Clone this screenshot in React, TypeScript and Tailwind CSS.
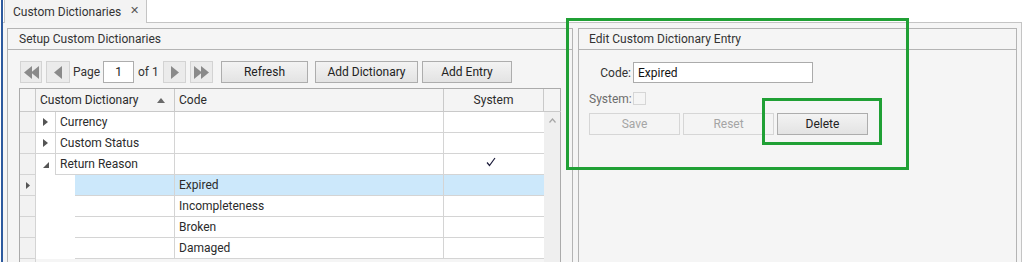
import React from "react";

type GroupRow = { kind: "group"; name: string; expanded: boolean; system?: boolean };
type ChildRow = { kind: "child"; code: string; selected?: boolean };
type Row = GroupRow | ChildRow;

const rows: Row[] = [
  { kind: "group", name: "Currency", expanded: false },
  { kind: "group", name: "Custom Status", expanded: false },
  { kind: "group", name: "Return Reason", expanded: true, system: true },
  { kind: "child", code: "Expired", selected: true },
  { kind: "child", code: "Incompleteness" },
  { kind: "child", code: "Broken" },
  { kind: "child", code: "Damaged" },
];

const TriLeft = () => (
  <svg width="8" height="13" viewBox="0 0 8 13">
    <path d="M8 0 L0 6.5 L8 13 Z" fill="#8a8a8a" />
  </svg>
);
const TriRight = () => (
  <svg width="8" height="13" viewBox="0 0 8 13">
    <path d="M0 0 L8 6.5 L0 13 Z" fill="#8a8a8a" />
  </svg>
);

const NavBtn = ({ children, w }: { children: React.ReactNode; w: string }) => (
  <div className={`${w} h-[22px] flex items-center justify-center border border-[#d3d3d3] bg-[#ebebeb]`}>{children}</div>
);

const Btn = ({ label, w }: { label: string; w: string }) => (
  <div className={`${w} h-[22px] flex items-center justify-center border border-[#adadad] bg-gradient-to-b from-[#f3f3f3] to-[#e3e3e3] text-[#222]`}>
    {label}
  </div>
);

const App = () => {
  return (
    <div className="relative w-[1023px] h-[262px] overflow-hidden bg-white flex font-['Roboto',sans-serif] text-[12px] text-[#2b2b2b]">
      <div className="w-[1px] shrink-0 bg-white" />
      <div className="w-[2px] shrink-0 bg-[#2d5a9e]" />
      <div className="w-[1020px] shrink-0 flex flex-col">
        {/* tab strip */}
        <div className="flex h-[23px] shrink-0">
          <div className="w-[1px] border-b border-[#c4c4c4]" />
          <div className="w-[143px] bg-[#f3f3f3] border-l border-r border-[#c4c4c4] flex items-center pl-[8px] text-[#333]">
            <span>Custom Dictionaries</span>
            <span className="ml-[9px] text-[11px] text-[#555]">✕</span>
          </div>
          <div className="w-[875px] border-b border-[#c4c4c4]" />
          <div className="w-[1px]" />
        </div>

        {/* main area */}
        <div className="w-[1019px] flex-1 bg-[#f5f5f5] border-r border-[#c4c4c4] pl-[4px] pr-[4px] pt-[5px] flex gap-[5px]">
          {/* left panel */}
          <div className="w-[566px] shrink-0 border-l border-t border-r border-[#b4b4b4] flex flex-col">
            <div className="h-[21px] shrink-0 border-b border-[#b4b4b4] pl-[11px] flex items-center text-[#333]">
              Setup Custom Dictionaries
            </div>
            <div className="flex-1 pl-[11px] pr-[11px] pt-[11px] flex flex-col gap-[5px]">
              {/* toolbar */}
              <div className="flex items-center h-[22px] pl-[1px]">
                <NavBtn w="w-[22px]">
                  <div className="flex -space-x-[1px]"><TriLeft /><TriLeft /></div>
                </NavBtn>
                <div className="w-[4px]" />
                <NavBtn w="w-[24px]"><TriLeft /></NavBtn>
                <div className="w-[26px] ml-[3px] text-[#333]">Page</div>
                <div className="ml-[4px] w-[31px] h-[22px] bg-white border border-[#adadad] flex items-center justify-center text-[#222]">1</div>
                <div className="ml-[4px] w-[20px] whitespace-nowrap text-[#333]">of 1</div>
                <div className="w-[5px]" />
                <NavBtn w="w-[23px]"><TriRight /></NavBtn>
                <div className="w-[4px]" />
                <NavBtn w="w-[23px]">
                  <div className="flex -space-x-[1px]"><TriRight /><TriRight /></div>
                </NavBtn>
                <div className="w-[8px]" />
                <Btn label="Refresh" w="w-[87px]" />
                <div className="w-[7px]" />
                <Btn label="Add Dictionary" w="w-[103px]" />
                <div className="w-[4px]" />
                <Btn label="Add Entry" w="w-[90px]" />
              </div>

              {/* grid */}
              <div className="w-[542px] flex-1 border-l border-t border-[#ababab] flex flex-col">
                {/* header */}
                <div className="flex h-[23px] shrink-0 bg-[#f4f4f4] border-b border-[#c9c9c9]">
                  <div className="w-[16px] border-r border-[#c9c9c9]" />
                  <div className="w-[139px] border-r border-[#c9c9c9] flex items-center pl-[4px] pr-[9px] justify-between">
                    <span>Custom Dictionary</span>
                    <svg width="8" height="5" viewBox="0 0 8 5"><path d="M0 5 L4 0 L8 5 Z" fill="#6a6a6a" /></svg>
                  </div>
                  <div className="w-[269px] border-r border-[#c9c9c9] flex items-center pl-[4px]">Code</div>
                  <div className="w-[100px] border-r border-[#c9c9c9] flex items-center justify-center">System</div>
                  <div className="w-[17px] border-r border-[#ababab]" />
                </div>

                {/* body */}
                <div className="flex flex-1">
                  <div className="w-[524px] flex flex-col">
                    {rows.map((r, i) =>
                      r.kind === "group" ? (
                        <div key={i} className="flex h-[21px]">
                          <div className="w-[16px] bg-[#f2f2f2] border-r border-b border-[#d4d4d4]" />
                          <div className={`w-[20px] bg-white border-r border-[#d4d4d4] flex items-center justify-center ${r.expanded ? "" : "border-b"}`}>
                            {r.expanded ? (
                              <svg width="6" height="6" viewBox="0 0 6 6" className="mt-[1px]"><path d="M6 0 L6 6 L0 6 Z" fill="#555" /></svg>
                            ) : (
                              <svg width="5" height="8" viewBox="0 0 5 8"><path d="M0 0 L5 4 L0 8 Z" fill="#555" /></svg>
                            )}
                          </div>
                          <div className="w-[119px] bg-white border-r border-b border-[#d4d4d4] flex items-center pl-[4px]">{r.name}</div>
                          <div className="w-[269px] bg-white border-r border-b border-[#d4d4d4]" />
                          <div className="w-[100px] bg-white border-b border-[#d4d4d4] flex items-center justify-center">
                            {r.system && (
                              <svg width="10" height="10" viewBox="0 0 10 10" className="-mt-[4px] -ml-[6px]">
                                <path d="M1 5.5 L3.5 8.5 L9 1" stroke="#1b1b3a" strokeWidth="1.2" fill="none" />
                              </svg>
                            )}
                          </div>
                        </div>
                      ) : (
                        <div key={i} className="flex h-[21px]">
                          <div className="w-[16px] bg-[#f2f2f2] border-r border-b border-[#d4d4d4] flex items-center justify-center">
                            {r.selected && (
                              <svg width="4" height="7" viewBox="0 0 4 7"><path d="M0 0 L4 3.5 L0 7 Z" fill="#555" /></svg>
                            )}
                          </div>
                          <div className="w-[39px] bg-white" />
                          <div className={`w-[100px] border-r border-b border-[#d4d4d4] ${r.selected ? "bg-[#cce8fb]" : "bg-white"}`} />
                          <div className={`w-[269px] border-r border-b border-[#d4d4d4] flex items-center pl-[4px] ${r.selected ? "bg-[#cce8fb]" : "bg-white"}`}>{r.code}</div>
                          <div className={`w-[100px] border-b border-[#d4d4d4] ${r.selected ? "bg-[#cce8fb]" : "bg-white"}`} />
                        </div>
                      )
                    )}
                    <div className="flex flex-1">
                      <div className="w-[16px] bg-[#f2f2f2] border-r border-[#d4d4d4]" />
                    </div>
                  </div>
                  <div className="w-[17px] bg-[#efefef] border-r border-[#ababab] flex justify-center pt-[6px]">
                    <svg width="7" height="5" viewBox="0 0 7 5"><path d="M0.5 4.5 L3.5 1 L6.5 4.5" stroke="#a6a6a6" strokeWidth="1.2" fill="none" /></svg>
                  </div>
                </div>
              </div>
            </div>
          </div>

          {/* right panel */}
          <div className="w-[439px] shrink-0 border-l border-t border-r border-[#b4b4b4] flex flex-col">
            <div className="h-[21px] shrink-0 border-b border-[#b4b4b4] pl-[10px] flex items-center text-[#333]">
              Edit Custom Dictionary Entry
            </div>
            <div className="pl-[10px] pt-[12px] flex flex-col">
              <div className="flex items-center h-[21px]">
                <div className="w-[42px] text-right text-[#333]">Code:</div>
                <div className="ml-[2px] w-[180px] h-[21px] bg-white border border-[#ababab] flex items-center pl-[4px] text-[#111]">Expired</div>
              </div>
              <div className="flex items-center h-[13px] mt-[9px]">
                <div className="w-[42px] text-right text-[#6d6d6d]">System:</div>
                <div className="ml-[2px] w-[13px] h-[13px] border border-[#d6d6d6] bg-[#f5f5f5]" />
              </div>
              <div className="flex mt-[8px] gap-[3px]">
                <div className="w-[91px] h-[22px] border border-[#d6d6d6] bg-[#f4f4f4] flex items-center justify-center text-[#a5a5a5]">Save</div>
                <div className="w-[91px] h-[22px] border border-[#d6d6d6] bg-[#f4f4f4] flex items-center justify-center text-[#a5a5a5]">Reset</div>
                <Btn label="Delete" w="w-[91px]" />
              </div>
            </div>
          </div>
        </div>
      </div>

      {/* highlight annotations */}
      <div className="absolute left-[566px] top-[18px] w-[343px] h-[152px] border-[3px] border-[#20a035]" />
      <div className="absolute left-[762px] top-[98px] w-[120px] h-[47px] border-[3px] border-[#20a035]" />
    </div>
  );
};

export default App;
